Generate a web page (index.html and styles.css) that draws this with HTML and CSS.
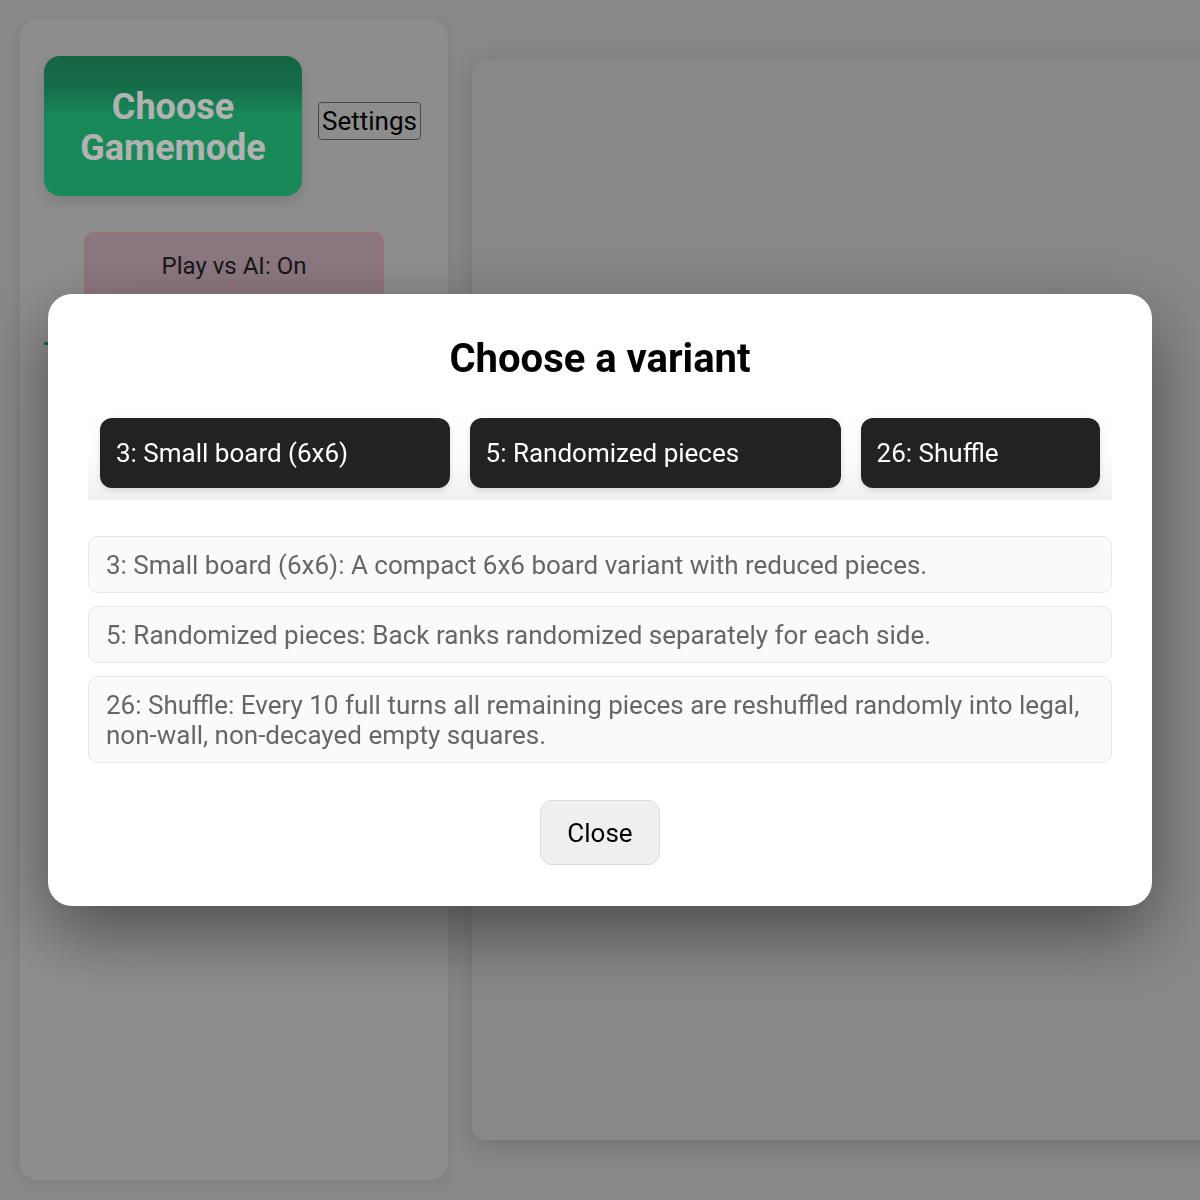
FILE: index.html
```html
<!DOCTYPE html>
<html lang="en">
<head>
<meta charset="utf-8">
<title>Choose a variant</title>
<link rel="stylesheet" href="styles.css">
</head>
<body>
<div class="app">
  <aside class="sidebar">
    <div class="top-row">
      <button class="gamemode-btn">Choose Gamemode</button>
      <button class="settings-btn">Settings</button>
    </div>
    <button class="ai-btn">Play vs AI: On</button>
    <div class="green-rule"></div>
  </aside>
  <main class="board-area"></main>
</div>

<div class="overlay">
  <div class="modal">
    <h2 class="modal-title">Choose a variant</h2>
    <div class="variant-row">
      <button class="variant-btn">3: Small board (6x6)</button>
      <button class="variant-btn">5: Randomized pieces</button>
      <button class="variant-btn">26: Shuffle</button>
    </div>
    <div class="desc-list">
      <div class="desc">3: Small board (6x6): A compact 6x6 board variant with reduced pieces.</div>
      <div class="desc">5: Randomized pieces: Back ranks randomized separately for each side.</div>
      <div class="desc">26: Shuffle: Every 10 full turns all remaining pieces are reshuffled randomly into legal, non-wall, non-decayed empty squares.</div>
    </div>
    <div class="modal-footer">
      <button class="close-btn">Close</button>
    </div>
  </div>
</div>
</body>
</html>
```

FILE: styles.css
```css
* { box-sizing: border-box; }

html, body {
  margin: 0;
  padding: 0;
  width: 1200px;
  height: 1200px;
  overflow: hidden;
}

body {
  font-family: Roboto, "Noto Sans", Arial, sans-serif;
  background: #c3c3c3;
}

.app {
  display: flex;
  align-items: flex-start;
  gap: 24px;
  padding: 20px;
  width: 1200px;
  overflow: hidden;
}

.sidebar {
  flex: 0 0 426px;
  height: 1160px;
  background: #cbcbcb;
  border-radius: 18px;
  box-shadow: 0 4px 12px rgba(0, 0, 0, 0.06);
  padding: 36px 24px;
  display: flex;
  flex-direction: column;
}

.top-row {
  display: flex;
  align-items: flex-start;
  gap: 16px;
}

.gamemode-btn {
  width: 258px;
  height: 140px;
  border: none;
  border-radius: 16px;
  background: linear-gradient(180deg, #1d9160 0%, #1f9c67 22%, #26c480 42%, #26c480 100%);
  color: #ffffff;
  font-family: Roboto, sans-serif;
  font-weight: 700;
  font-size: 36px;
  line-height: 41px;
  padding: 4px 20px 0;
  text-align: center;
  box-shadow: 0 6px 16px rgba(0, 0, 0, 0.12);
}

.settings-btn {
  margin-top: 46px;
  font-family: Roboto, sans-serif;
  font-size: 26px;
  line-height: 30px;
  padding: 3px 3px;
  border: 1px solid #666666;
  border-radius: 4px;
  background: transparent;
  color: #000;
}

.ai-btn {
  align-self: center;
  width: 300px;
  height: 68px;
  margin-top: 36px;
  background: #c8abb7;
  border: 1px solid #f09a9a;
  border-radius: 10px;
  color: #222;
  font-family: Roboto, sans-serif;
  font-size: 24px;
}

.green-rule {
  margin-top: 42px;
  height: 3px;
  width: 380px;
  align-self: flex-start;
  background: #1f9a66;
}

.board-area {
  flex: 0 0 1080px;
  height: 1080px;
  margin-top: 40px;
  background: #c3c3c3;
  border-radius: 14px;
  box-shadow: 0 6px 24px rgba(0, 0, 0, 0.16);
}

.overlay {
  position: fixed;
  inset: 0;
  background: rgba(0, 0, 0, 0.3);
  display: flex;
  align-items: center;
  justify-content: center;
}

.modal {
  width: 1104px;
  background: #ffffff;
  border-radius: 24px;
  padding: 40px 40px 41px;
  box-shadow: 0 26px 70px rgba(0, 0, 0, 0.45);
}

.modal-title {
  margin: 0 0 25px;
  text-align: center;
  font-size: 40px;
  line-height: 49px;
  font-weight: 700;
  color: #000;
}

.variant-row {
  display: flex;
  gap: 20px;
  padding: 10px 12px 12px;
  background: linear-gradient(180deg, #ffffff 0%, #fcfcfc 55%, #f0f0f0 100%);
}

.variant-btn {
  flex: 1 1 auto;
  text-align: left;
  background: #222222;
  color: #ffffff;
  border: none;
  border-radius: 12px;
  padding: 20px 16px;
  font-family: Roboto, sans-serif;
  font-size: 26px;
  line-height: 30px;
  white-space: nowrap;
  box-shadow: 0 2px 6px rgba(0, 0, 0, 0.12);
}

.desc-list {
  margin-top: 36px;
  display: flex;
  flex-direction: column;
  gap: 13px;
}

.desc {
  background: #fafafa;
  border: 1px solid #e8e8e8;
  border-radius: 10px;
  padding: 13px 17px 12px;
  font-size: 26px;
  line-height: 30px;
  color: #666666;
}

.modal-footer {
  margin-top: 37px;
  display: flex;
  justify-content: center;
}

.close-btn {
  background: #efefef;
  border: 1px solid #dddddd;
  border-radius: 12px;
  padding: 17px 26px 16px;
  font-family: Roboto, sans-serif;
  font-size: 26px;
  line-height: 30px;
  color: #000;
}
```
